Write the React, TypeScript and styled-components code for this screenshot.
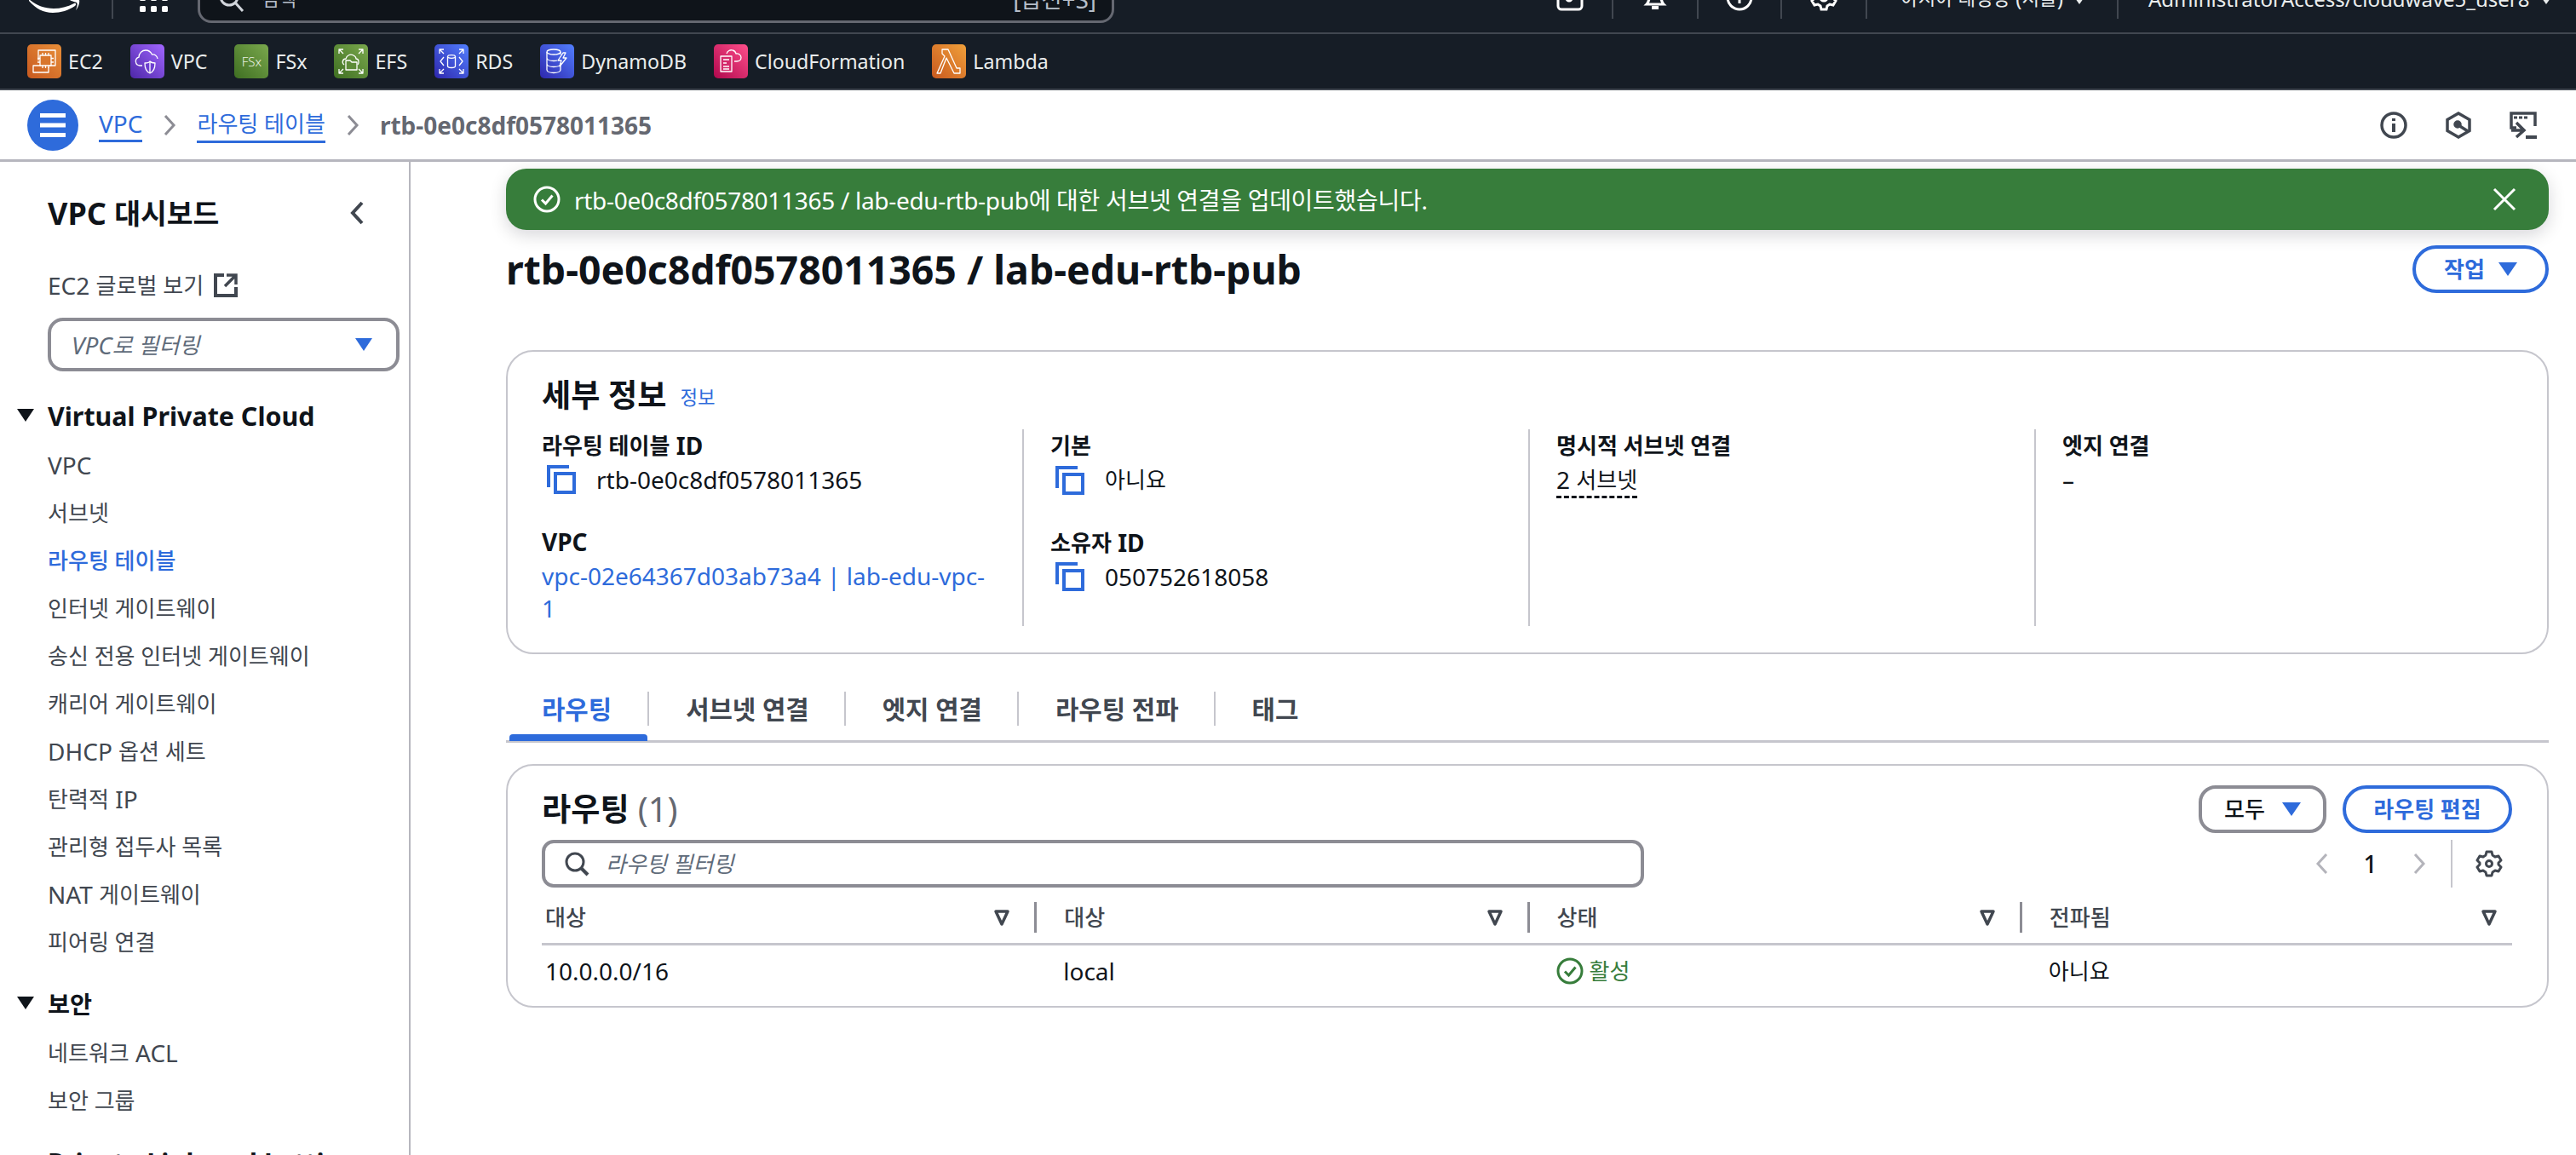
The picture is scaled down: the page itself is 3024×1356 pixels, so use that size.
import React from "react";
import styled, { createGlobalStyle } from "styled-components";

const BLUE = "#2e6bdb";
const INK = "#0f141a";
const SLATE = "#414750";
const LINE = "#c6c6cd";
const FIELD = "#8c8c94";
const GREEN = "#377d3b";
const NAVBG = "#161d26";

const GlobalStyle = createGlobalStyle`
  html, body { margin: 0; padding: 0; background: #fff; }
  body {
    font-family: "Noto Sans", "Noto Sans CJK KR", sans-serif;
    color: ${INK};
  }
  * { box-sizing: border-box; }
`;

// hangul reads a little smaller than the latin in the reference
const Hangul = styled.span`
  font-size: 0.93em;
  position: relative;
  top: -1px;
`;

const T = ({ children }: { children: string }) => (
  <>
    {children.split(/([\uAC00-\uD7A3]+(?: [\uAC00-\uD7A3]+)*)/).map((part, i) =>
      i % 2 ? <Hangul key={i}>{part}</Hangul> : part
    )}
  </>
);

const Page = styled.div`
  width: 3024px;
  height: 1356px;
  overflow: hidden;
  display: flex;
  flex-direction: column;
`;

/* top nav, cut off by the top of the screenshot */
const TopBar = styled.header`
  height: 40px;
  flex: none;
  background: ${NAVBG};
  border-bottom: 2px solid ${SLATE};
  display: flex;
  align-items: flex-end;
  color: #fff;
  font-size: 24px;
  line-height: 28px;
`;

const Logo = styled.svg`
  width: 62px;
  height: 30px;
  margin: 0 0 22px 34px;
  flex: none;
`;

const TopDivider = styled.div`
  align-self: flex-start;
  width: 2px;
  height: 22px;
  margin-left: 35px;
  background: ${SLATE};
  flex: none;
`;

const GridIcon = styled.svg`
  width: 33px;
  height: 33px;
  margin: 0 0 24px 31px;
  flex: none;
`;

const SearchBox = styled.div`
  width: 1076px;
  height: 60px;
  margin: 0 0 11px 35px;
  padding: 0 18px 10px 22px;
  flex: none;
  background: #0f141a;
  border: 3px solid #656871;
  border-radius: 16px;
  display: flex;
  align-items: flex-end;
  color: #b6bec9;
  gap: 20px;
`;

const SearchKey = styled.span`
  margin-left: auto;
  font-size: 28px;
`;

const TopRight = styled.div`
  margin-left: auto;
  display: flex;
  align-self: flex-start;
  height: 22px;
`;

const TopCell = styled.div<{ $w: number; $start?: boolean; $last?: boolean }>`
  width: ${(p) => p.$w}px;
  height: 22px;
  display: flex;
  align-items: flex-end;
  justify-content: ${(p) => (p.$start ? "flex-start" : "center")};
  gap: 14px;
  padding-left: ${(p) => (p.$start ? 35 : 0)}px;
  border-right: ${(p) => (p.$last ? "none" : `2px solid ${SLATE}`)};
  white-space: nowrap;
`;

const TopIcon = styled.svg`
  width: 32px;
  height: 32px;
  margin-bottom: 9px;
  flex: none;
`;

const TopLabel = styled.span`
  margin-bottom: 9px;
  color: #eaeded;
`;

const TinyCaret = styled.span`
  width: 0;
  height: 0;
  margin-bottom: 17px;
  border-left: 5px solid transparent;
  border-right: 5px solid transparent;
  border-top: 7px solid #eaeded;
`;

/* favourites bar */
const ServiceBar = styled.nav`
  height: 66px;
  flex: none;
  background: ${NAVBG};
  border-bottom: 2px solid ${SLATE};
  padding-left: 32px;
  display: flex;
  align-items: center;
  gap: 32px;
`;

const ServiceLink = styled.a`
  display: flex;
  align-items: center;
  gap: 8px;
  color: #eaeded;
  font-size: 23.2px;
  line-height: 40px;
`;

const ServiceTile = styled.span<{ $from: string; $to: string }>`
  width: 40px;
  height: 40px;
  border-radius: 5px;
  background: linear-gradient(45deg, ${(p) => p.$from}, ${(p) => p.$to});
  display: flex;
  align-items: center;
  justify-content: center;
  color: #e9f1e2;
  font-size: 15px;
  font-weight: 300;
  svg {
    width: 40px;
    height: 40px;
    fill: none;
    stroke: #fff;
    stroke-width: 1.3;
    stroke-linejoin: round;
  }
`;

/* breadcrumbs */
const CrumbBar = styled.div`
  height: 84px;
  flex: none;
  border-bottom: 3px solid #b6b6be;
  display: flex;
  align-items: center;
  padding: 0 46px 0 32px;
  font-size: 28px;
`;

const MenuButton = styled.span`
  width: 60px;
  height: 60px;
  border-radius: 50%;
  background: ${BLUE};
  margin-right: 24px;
  display: flex;
  align-items: center;
  justify-content: center;
`;

const CrumbLink = styled.a`
  color: ${BLUE};
  border-bottom: 3px solid ${BLUE};
  line-height: 38px;
`;

const CrumbArrow = styled.svg`
  width: 16px;
  height: 24px;
  margin: 0 24px;
  fill: none;
  stroke: #8c8c94;
  stroke-width: 3;
`;

const CrumbCurrent = styled.span`
  color: #656871;
  font-weight: 700;
  font-size: 28px;
`;

const CrumbTools = styled.div`
  margin-left: auto;
  display: flex;
  gap: 44px;
  svg {
    width: 32px;
    height: 32px;
  }
`;

/* page body */
const Body = styled.div`
  flex: 1;
  min-height: 0;
  display: flex;
`;

const Sidebar = styled.aside`
  width: 482px;
  flex: none;
  border-right: 2px solid #b6b6be;
  padding: 38px 0 0 56px;
  color: ${SLATE};
  font-size: 28px;
`;

const SideTitleRow = styled.div`
  width: 372px;
  height: 44px;
  display: flex;
  align-items: center;
  justify-content: space-between;
  color: ${INK};
  font-size: 36px;
  font-weight: 700;
`;

const GlobalLink = styled.a`
  display: flex;
  align-items: center;
  gap: 12px;
  height: 36px;
  margin-top: 45px;
`;

const VpcSelect = styled.div`
  width: 413px;
  height: 63px;
  margin-top: 20px;
  border: 4px solid ${FIELD};
  border-radius: 18px;
  padding: 0 28px 0 24px;
  display: flex;
  align-items: center;
  justify-content: space-between;
  color: #5f6b7a;
  font-style: italic;
`;

const FilledCaret = styled.span<{ $size?: number; $color?: string }>`
  display: block;
  width: 0;
  height: 0;
  flex: none;
  border-left: ${(p) => p.$size ?? 10}px solid transparent;
  border-right: ${(p) => p.$size ?? 10}px solid transparent;
  border-top: ${(p) => ((p.$size ?? 10) * 3) / 2}px solid ${(p) => p.$color ?? BLUE};
`;

const SideHeading = styled.h3<{ $gap: number; $after: number }>`
  position: relative;
  margin: ${(p) => p.$gap}px 0 ${(p) => p.$after}px;
  height: 40px;
  display: flex;
  align-items: center;
  color: ${INK};
  font-size: 30.4px;
  font-weight: 700;
  white-space: nowrap;
  & > i {
    position: absolute;
    left: -36px;
    top: 12px;
  }
`;

const SideItem = styled.a<{ $active?: boolean }>`
  height: 56px;
  display: flex;
  align-items: center;
  color: ${(p) => (p.$active ? BLUE : SLATE)};
  font-weight: ${(p) => (p.$active ? 500 : 400)};
`;

const Main = styled.main`
  flex: 1;
  min-width: 0;
  padding: 8px 32px 0 112px;
`;

const Flash = styled.div`
  height: 72px;
  background: ${GREEN};
  border-radius: 24px;
  box-shadow: 0 6px 20px rgba(0, 7, 22, 0.16);
  padding: 0 38px 0 32px;
  display: flex;
  align-items: center;
  gap: 16px;
  color: #fff;
  font-size: 28px;
  letter-spacing: -0.3px;
  svg {
    flex: none;
  }
  ${Hangul} {
    font-size: 1em;
    top: 0;
  }
`;

const FlashClose = styled.svg`
  margin-left: auto;
`;

const TitleRow = styled.div`
  margin-top: 18px;
  height: 56px;
  display: flex;
  align-items: center;
  justify-content: space-between;
`;

const PageTitle = styled.h1`
  margin: 0;
  font-size: 46.4px;
  font-weight: 700;
  white-space: nowrap;
`;

const PillButton = styled.button<{ $tone?: "blue" | "grey"; $w: number }>`
  width: ${(p) => p.$w}px;
  height: 56px;
  flex: none;
  padding: 0;
  background: #fff;
  border: 4px solid ${(p) => (p.$tone === "grey" ? FIELD : BLUE)};
  border-radius: ${(p) => (p.$tone === "grey" ? 20 : 28)}px;
  color: ${(p) => (p.$tone === "grey" ? INK : BLUE)};
  font-family: inherit;
  font-size: 28px;
  font-weight: ${(p) => (p.$tone === "grey" ? 500 : 700)};
  display: flex;
  align-items: center;
  justify-content: center;
  gap: ${(p) => (p.$tone === "grey" ? 20 : 16)}px;
`;

const Card = styled.section`
  border: 2px solid ${LINE};
  border-radius: 32px;
`;

const DetailsCard = styled(Card)`
  margin-top: 67px;
  height: 357px;
  padding: 29px 40px 0;
`;

const CardHeading = styled.h2`
  margin: 0;
  height: 44px;
  padding-bottom: 2px;
  display: flex;
  align-items: center;
  font-size: 40px;
  font-weight: 700;
  white-space: nowrap;
`;

const InfoLink = styled.a`
  margin: 6px 0 0 16px;
  color: ${BLUE};
  font-size: 24px;
  font-weight: 400;
`;

const DetailGrid = styled.div`
  margin-top: 18px;
  height: 231px;
  display: grid;
  grid-template-columns: 564px 594px 594px 1fr;
`;

const DetailCol = styled.div<{ $first?: boolean }>`
  padding: 1px 32px 0 ${(p) => (p.$first ? 0 : 31)}px;
  border-left: ${(p) => (p.$first ? "none" : `2px solid ${LINE}`)};
`;

const FieldLabel = styled.div<{ $next?: boolean }>`
  margin-top: ${(p) => (p.$next ? 36 : 0)}px;
  height: 36px;
  line-height: 36px;
  font-size: 28px;
  font-weight: 700;
`;

const FieldValue = styled.div`
  margin-top: 3px;
  font-size: 28px;
  line-height: 38px;
`;

const CopyValue = styled(FieldValue)`
  display: flex;
  align-items: center;
  gap: 24px;
  padding-left: 6px;
`;

const ValueLink = styled.a`
  color: ${BLUE};
  white-space: nowrap;
`;

const DashedValue = styled.span`
  border-bottom: 3px dashed ${INK};
  padding-bottom: 0;
  display: inline-block;
  line-height: 35px;
`;

const TabBar = styled.div`
  margin-top: 44px;
  height: 60px;
  border-bottom: 3px solid ${LINE};
  display: flex;
  align-items: flex-start;
  padding-left: 4px;
`;

const Tab = styled.a<{ $active?: boolean; $last?: boolean }>`
  position: relative;
  height: 40px;
  padding: 0 ${(p) => (p.$active ? 42 : 41)}px 0 ${(p) => (p.$active ? 38 : 43)}px;
  display: flex;
  align-items: center;
  border-right: ${(p) => (p.$last ? "none" : `2px solid ${LINE}`)};
  color: ${(p) => (p.$active ? BLUE : SLATE)};
  font-size: 32px;
  font-weight: 700;
  &::after {
    content: "";
    display: ${(p) => (p.$active ? "block" : "none")};
    position: absolute;
    left: 0;
    right: 0;
    top: 50px;
    height: 8px;
    border-radius: 4px 4px 0 0;
    background: ${BLUE};
  }
`;

const RoutesCard = styled(Card)`
  margin-top: 25px;
  height: 286px;
  padding: 23px 41px 0 40px;
`;

const RoutesHead = styled.div`
  height: 56px;
  display: flex;
  align-items: center;
  justify-content: space-between;
`;

const Count = styled.span`
  margin-left: 10px;
  color: #656871;
  font-weight: 400;
`;

const HeadActions = styled.div`
  display: flex;
  gap: 19px;
`;

const FilterRow = styled.div`
  margin-top: 8px;
  height: 56px;
  display: flex;
  align-items: center;
`;

const FilterInput = styled.div`
  width: 1294px;
  height: 56px;
  border: 4px solid ${FIELD};
  border-radius: 14px;
  padding-left: 22px;
  display: flex;
  align-items: center;
  gap: 19px;
  color: #5f6b7a;
  font-size: 28px;
  font-style: italic;
`;

const Pager = styled.div`
  margin-left: auto;
  height: 56px;
  display: flex;
  align-items: center;
  font-size: 28px;
  font-weight: 500;
`;

const PagerCell = styled.span`
  width: 57px;
  display: flex;
  justify-content: center;
`;

const PagerTools = styled.span`
  width: 72px;
  height: 56px;
  margin-left: 9px;
  border-left: 2px solid ${LINE};
  display: flex;
  align-items: center;
  justify-content: flex-end;
  padding-right: 11px;
`;

const RouteGrid = styled.div`
  display: grid;
  grid-template-columns: repeat(4, 1fr);
`;

const HeadRow = styled(RouteGrid)`
  margin-top: 17px;
  padding-bottom: 12px;
  border-bottom: 3px solid ${LINE};
`;

const HeadCell = styled.div<{ $first?: boolean; $last?: boolean }>`
  height: 36px;
  padding: 0 ${(p) => (p.$last ? 16 : 27)}px 0 ${(p) => (p.$first ? 4 : 32)}px;
  border-left: ${(p) => (p.$first ? "none" : `3px solid #8c8c94`)};
  display: flex;
  align-items: center;
  justify-content: space-between;
  color: ${SLATE};
  font-size: 28px;
  font-weight: 500;
`;

const BodyCell = styled.div<{ $first?: boolean }>`
  height: 60px;
  padding-left: ${(p) => (p.$first ? 4 : 34)}px;
  display: flex;
  align-items: center;
  font-size: 28px;
`;

const StatusOk = styled.span`
  display: flex;
  align-items: center;
  gap: 7px;
  color: ${GREEN};
`;

const SortIcon = () => (
  <svg width="22" height="22" viewBox="0 0 22 22" fill="none">
    <path d="M4 4h14l-7 15z" stroke={SLATE} strokeWidth="3.500" strokeLinejoin="round" />
  </svg>
);

const CopyIcon = () => (
  <svg width="34" height="34" viewBox="0 0 34 34" fill="none" stroke={BLUE} strokeWidth="4" style={{ flex: "none" }}>
    <path d="M2 26V2h24" />
    <rect x="10" y="10" width="22" height="22" />
  </svg>
);

const CheckCircle = ({ color, size }: { color: string; size: number }) => (
  <svg width={size} height={size} viewBox="0 0 32 32" fill="none" stroke={color} strokeWidth="3">
    <circle cx="16" cy="16" r="14" />
    <path d="M10 16.500l4.500 4.500 8-9.500" />
  </svg>
);

const SERVICES = [
  {
    name: "EC2",
    from: "#c8591f",
    to: "#e88f39",
    art: (
      <>
        <path d="M13 19V7h20v18H25" />
        <path d="M16 25H7v8h18v-6" />
        <rect x="15" y="13" width="13" height="12" fill="#d9762c" />
        <path d="M18 10v3M21.500 10v3M25 10v3M18 25v3M21.500 25v3M25 25v3M12 16.500h3M12 21h3M28 16.500h3M28 21h3" />
      </>
    ),
  },
  {
    name: "VPC",
    from: "#4d27a8",
    to: "#a166ff",
    art: (
      <>
        <path d="M14 25h-3a5 5 0 0 1-1-9.800C10 10 14 7 18 7c3.500 0 6 2 7.500 5 3-.5 6 1.500 6.500 5" />
        <path d="M17 22c3 0 5.500-1 6-2 .8 1 3 2 6 2 0 5-1 10-6 12-5-2-6-7-6-12z" fill="#6d3fd0" />
        <path d="M23 20v14" />
      </>
    ),
  },
  { name: "FSx", from: "#3f6f22", to: "#7aa84d", art: <>FSx</> },
  {
    name: "EFS",
    from: "#3f6f22",
    to: "#7aa84d",
    art: (
      <>
        <path d="M6 11V6h5M6 6l5 5M34 11V6h-5M34 6l-5 5M6 29v5h5M6 34l5-5M34 29v5h-5M34 34l-5-5" />
        <path d="M12 24c-3-2-2-7 2-7 1-4 5-6 9-4 2 1 3 3 3 4 3 0 4 4 2 7" />
        <path d="M14 19h5l2 2h6v9H14z" fill="#5d8b37" />
      </>
    ),
  },
  {
    name: "RDS",
    from: "#2e27ad",
    to: "#527fff",
    art: (
      <>
        <path d="M6 11V6h5M6 6l5 5M34 11V6h-5M34 6l-5 5M6 29v5h5M6 34l5-5M34 29v5h-5M34 34l-5-5" />
        <path d="M11 15l-4 5 4 5M29 15l4 5-4 5" />
        <ellipse cx="20" cy="14.500" rx="4.500" ry="1.800" />
        <path d="M15.500 14.500v11c0 1 2 2 4.500 2s4.500-1 4.500-2v-11" />
      </>
    ),
  },
  {
    name: "DynamoDB",
    from: "#2e27ad",
    to: "#527fff",
    art: (
      <>
        <ellipse cx="16" cy="9" rx="8" ry="3" />
        <path d="M8 9v21c0 2 3.500 3.500 8 3.500s8-1.500 8-3.500v-8M8 16c0 2 3.500 3.500 8 3.500 1.500 0 3-.2 4-.5M8 23c0 2 3.500 3.500 8 3.500s8-1.500 8-3.500M24 9v3" />
        <path d="M27 10l-6 9h4l-2 7 8-10h-4l3-6z" />
      </>
    ),
  },
  {
    name: "CloudFormation",
    from: "#b0084d",
    to: "#ff4f8b",
    art: (
      <>
        <path d="M15 11c1-3 4-5 7-4 2 .5 3.500 2 4 4 3-.5 6 1.500 6 4.500 0 2.500-2 4.500-5 4.500h-3" />
        <path d="M8 14h13v18H8z" fill="#d42a6b" />
        <path d="M11 18h7M11 22h4M11 26h7M11 29h7" />
      </>
    ),
  },
  {
    name: "Lambda",
    from: "#c8591f",
    to: "#f0a03a",
    art: <path d="M12 6h7l10 22h4v6h-7L17 16l-7 18H6l9-20-3-3z" />,
  },
];

const NAV_VPC = [
  "VPC",
  "서브넷",
  "라우팅 테이블",
  "인터넷 게이트웨이",
  "송신 전용 인터넷 게이트웨이",
  "캐리어 게이트웨이",
  "DHCP 옵션 세트",
  "탄력적 IP",
  "관리형 접두사 목록",
  "NAT 게이트웨이",
  "피어링 연결",
];

const TABS = ["라우팅", "서브넷 연결", "엣지 연결", "라우팅 전파", "태그"];
const COLUMNS = ["대상", "대상", "상태", "전파됨"];

const App = () => {
  return (
    <Page>
      <GlobalStyle />
      <TopBar>
        <Logo viewBox="0 0 62 30">
          <path d="M0 13c8 7 18 11 29 11 8 0 16-2 24-6 2-1 3 1 1 3-7 5-17 8-26 8C17 29 8 24 0 15z" fill="#fff" />
          <path d="M48 14c3-1 9-1 11 0 1 2-1 9-4 12 2-5 2-8 1-9-1-1-5-1-8-3z" fill="#fff" />
        </Logo>
        <TopDivider />
        <GridIcon viewBox="0 0 33 33" fill="#fff">
          {[0, 13, 26].map((x) =>
            [0, 13, 26].map((y) => <rect key={`${x}-${y}`} x={x} y={y} width="7" height="7" rx="1.500" />)
          )}
        </GridIcon>
        <SearchBox>
          <svg width="30" height="30" viewBox="0 0 30 30" fill="none" stroke="#d1d5db" strokeWidth="3">
            <circle cx="12" cy="12" r="10" />
            <path d="M19 19l9 10" />
          </svg>
          <span>
            <T>검색</T>
          </span>
          <SearchKey>
            <T>[옵션+S]</T>
          </SearchKey>
        </SearchBox>
        <TopRight>
          <TopCell $w={100}>
            <TopIcon viewBox="0 0 32 32" fill="none" stroke="#fff" strokeWidth="3">
              <rect x="2" y="2" width="28" height="28" rx="4" />
              <circle cx="15" cy="17" r="3" fill="#fff" />
            </TopIcon>
          </TopCell>
          <TopCell $w={100}>
            <TopIcon viewBox="0 0 32 32" fill="none" stroke="#fff" strokeWidth="3">
              <path d="M6 24c3-3 3-6 3-11a7 7 0 0 1 14 0c0 5 0 8 3 11z" />
              <path d="M12 28h8" strokeWidth="4" />
            </TopIcon>
          </TopCell>
          <TopCell $w={98}>
            <TopIcon viewBox="0 0 32 32" fill="none" stroke="#fff" strokeWidth="3">
              <circle cx="16" cy="16" r="14" />
              <path d="M16 14v9" />
            </TopIcon>
          </TopCell>
          <TopCell $w={100}>
            <TopIcon viewBox="0 0 32 32" fill="none" stroke="#fff" strokeWidth="3">
              <path d="M13 2h6l1 4 3 2 4-1 3 5-3 3v2l3 3-3 5-4-1-3 2-1 4h-6l-1-4-3-2-4 1-3-5 3-3v-2l-3-3 3-5 4 1 3-2z" />
              <circle cx="16" cy="16" r="4" />
            </TopIcon>
          </TopCell>
          <TopCell $w={295}>
            <TopLabel>
              <T>아시아 태평양 (서울)</T>
            </TopLabel>
            <TinyCaret />
          </TopCell>
          <TopCell $w={537} $start $last>
            <TopLabel>AdministratorAccess/cloudwave5_user8</TopLabel>
            <TinyCaret />
          </TopCell>
        </TopRight>
      </TopBar>

      <ServiceBar>
        {SERVICES.map((s) => (
          <ServiceLink key={s.name}>
            <ServiceTile $from={s.from} $to={s.to}>
              {s.name === "FSx" ? s.art : <svg viewBox="0 0 40 40">{s.art}</svg>}
            </ServiceTile>
            {s.name}
          </ServiceLink>
        ))}
      </ServiceBar>

      <CrumbBar>
        <MenuButton>
          <svg width="30" height="28" viewBox="0 0 30 28" fill="#fff">
            <rect width="30" height="5" />
            <rect y="11.500" width="30" height="5" />
            <rect y="23" width="30" height="5" />
          </svg>
        </MenuButton>
        <CrumbLink>VPC</CrumbLink>
        <CrumbArrow viewBox="0 0 16 24">
          <path d="M3 1l10 11L3 23" />
        </CrumbArrow>
        <CrumbLink>
          <T>라우팅 테이블</T>
        </CrumbLink>
        <CrumbArrow viewBox="0 0 16 24">
          <path d="M3 1l10 11L3 23" />
        </CrumbArrow>
        <CrumbCurrent>rtb-0e0c8df0578011365</CrumbCurrent>
        <CrumbTools>
          <svg viewBox="0 0 32 32" fill="none" stroke={SLATE} strokeWidth="3.500">
            <circle cx="16" cy="16" r="14" />
            <path d="M16 14v10" strokeWidth="4" />
            <path d="M16 8v3" strokeWidth="4" />
          </svg>
          <svg viewBox="0 0 32 32" fill="none" stroke={SLATE} strokeWidth="3.500">
            <path d="M16 2l13 7.500v13L16 30 3 22.500v-13z" />
            <circle cx="15" cy="15" r="3" fill={SLATE} />
            <path d="M16 16l11 7" />
          </svg>
          <svg viewBox="0 0 32 32" fill="none" stroke={SLATE} strokeWidth="3.500">
            <path d="M8 19H2V2h28v15" />
            <path d="M5 7h17" strokeWidth="3" strokeDasharray="4 2" />
            <path d="M2 22h14M8 13l9 9-9 8" />
            <path d="M19 30h13" strokeWidth="4" />
          </svg>
        </CrumbTools>
      </CrumbBar>

      <Body>
        <Sidebar>
          <SideTitleRow>
            <span>
              <T>VPC 대시보드</T>
            </span>
            <svg width="18" height="28" viewBox="0 0 18 28" fill="none" stroke={SLATE} strokeWidth="4">
              <path d="M15 2L4 14l11 12" />
            </svg>
          </SideTitleRow>
          <GlobalLink>
            <span>
              <T>EC2 글로벌 보기</T>
            </span>
            <svg width="28" height="28" viewBox="0 0 28 28" fill="none" stroke={SLATE} strokeWidth="4">
              <path d="M12 2H2v24h24V16" />
              <path d="M15 2h11v11M26 2L13 15" strokeWidth="3.500" />
            </svg>
          </GlobalLink>
          <VpcSelect>
            <span>
              <T>VPC로 필터링</T>
            </span>
            <FilledCaret />
          </VpcSelect>
          <SideHeading $gap={32} $after={10}>
            <i>
              <FilledCaret $color={INK} />
            </i>
            Virtual Private Cloud
          </SideHeading>
          {NAV_VPC.map((label) => (
            <SideItem key={label} $active={label === "라우팅 테이블"}>
              <span>
                <T>{label}</T>
              </span>
            </SideItem>
          ))}
          <SideHeading $gap={24} $after={10}>
            <i>
              <FilledCaret $color={INK} />
            </i>
            <T>보안</T>
          </SideHeading>
          <SideItem>
            <span>
              <T>네트워크 ACL</T>
            </span>
          </SideItem>
          <SideItem>
            <span>
              <T>보안 그룹</T>
            </span>
          </SideItem>
          <SideHeading $gap={24} $after={0}>
            Private Link and Lattice
          </SideHeading>
        </Sidebar>

        <Main>
          <Flash>
            <CheckCircle color="#fff" size={32} />
            <span>
              <T>rtb-0e0c8df0578011365 / lab-edu-rtb-pub에 대한 서브넷 연결을 업데이트했습니다.</T>
            </span>
            <FlashClose width="28" height="28" viewBox="0 0 28 28" fill="none" stroke="#fff" strokeWidth="3">
              <path d="M2 2l24 24M26 2L2 26" />
            </FlashClose>
          </Flash>

          <TitleRow>
            <PageTitle>rtb-0e0c8df0578011365 / lab-edu-rtb-pub</PageTitle>
            <PillButton $w={160}>
              <T>작업</T>
              <FilledCaret $size={11} />
            </PillButton>
          </TitleRow>

          <DetailsCard>
            <CardHeading>
              <T>세부 정보</T>
              <InfoLink>
                <T>정보</T>
              </InfoLink>
            </CardHeading>
            <DetailGrid>
              <DetailCol $first>
                <FieldLabel>
                  <T>라우팅 테이블 ID</T>
                </FieldLabel>
                <CopyValue>
                  <CopyIcon />
                  rtb-0e0c8df0578011365
                </CopyValue>
                <FieldLabel $next>VPC</FieldLabel>
                <FieldValue>
                  <ValueLink>
                    vpc-02e64367d03ab73a4 | lab-edu-vpc-
                    <br />1
                  </ValueLink>
                </FieldValue>
              </DetailCol>
              <DetailCol>
                <FieldLabel>
                  <T>기본</T>
                </FieldLabel>
                <CopyValue>
                  <CopyIcon />
                  <span>
                    <T>아니요</T>
                  </span>
                </CopyValue>
                <FieldLabel $next>
                  <T>소유자 ID</T>
                </FieldLabel>
                <CopyValue>
                  <CopyIcon />
                  050752618058
                </CopyValue>
              </DetailCol>
              <DetailCol>
                <FieldLabel>
                  <T>명시적 서브넷 연결</T>
                </FieldLabel>
                <FieldValue>
                  <DashedValue>
                    <T>2 서브넷</T>
                  </DashedValue>
                </FieldValue>
              </DetailCol>
              <DetailCol>
                <FieldLabel>
                  <T>엣지 연결</T>
                </FieldLabel>
                <FieldValue>–</FieldValue>
              </DetailCol>
            </DetailGrid>
          </DetailsCard>

          <TabBar>
            {TABS.map((tab, i) => (
              <Tab key={tab} $active={i === 0} $last={i === TABS.length - 1}>
                <T>{tab}</T>
              </Tab>
            ))}
          </TabBar>

          <RoutesCard>
            <RoutesHead>
              <CardHeading>
                <T>라우팅</T>
                <Count>(1)</Count>
              </CardHeading>
              <HeadActions>
                <PillButton $w={150} $tone="grey">
                  <T>모두</T>
                  <FilledCaret $size={11} />
                </PillButton>
                <PillButton $w={199}>
                  <T>라우팅 편집</T>
                </PillButton>
              </HeadActions>
            </RoutesHead>
            <FilterRow>
              <FilterInput>
                <svg width="30" height="30" viewBox="0 0 30 30" fill="none" stroke={SLATE} strokeWidth="3">
                  <circle cx="13" cy="13" r="10" />
                  <path d="M20 20l8 8" strokeWidth="4" />
                </svg>
                <span>
                  <T>라우팅 필터링</T>
                </span>
              </FilterInput>
              <Pager>
                <PagerCell>
                  <svg width="16" height="26" viewBox="0 0 16 26" fill="none" stroke="#b4b4bb" strokeWidth="3">
                    <path d="M13 2L3 13l10 11" />
                  </svg>
                </PagerCell>
                <PagerCell>1</PagerCell>
                <PagerCell>
                  <svg width="16" height="26" viewBox="0 0 16 26" fill="none" stroke="#b4b4bb" strokeWidth="3">
                    <path d="M3 2l10 11L3 24" />
                  </svg>
                </PagerCell>
                <PagerTools>
                  <svg width="32" height="32" viewBox="0 0 32 32" fill="none" stroke={SLATE} strokeWidth="3" strokeLinejoin="round">
                    <path d="M13 2h6l1 4 3 2 4-1 3 5-3 3v2l3 3-3 5-4-1-3 2-1 4h-6l-1-4-3-2-4 1-3-5 3-3v-2l-3-3 3-5 4 1 3-2z" />
                    <circle cx="16" cy="16" r="3.500" />
                  </svg>
                </PagerTools>
              </Pager>
            </FilterRow>
            <HeadRow>
              {COLUMNS.map((col, i) => (
                <HeadCell key={i} $first={i === 0} $last={i === COLUMNS.length - 1}>
                  <span>
                    <T>{col}</T>
                  </span>
                  <SortIcon />
                </HeadCell>
              ))}
            </HeadRow>
            <RouteGrid>
              <BodyCell $first>10.0.0.0/16</BodyCell>
              <BodyCell>local</BodyCell>
              <BodyCell>
                <StatusOk>
                  <CheckCircle color={GREEN} size={32} />
                  <span>
                    <T>활성</T>
                  </span>
                </StatusOk>
              </BodyCell>
              <BodyCell>
                <span>
                  <T>아니요</T>
                </span>
              </BodyCell>
            </RouteGrid>
          </RoutesCard>
        </Main>
      </Body>
    </Page>
  );
};

export default App;
